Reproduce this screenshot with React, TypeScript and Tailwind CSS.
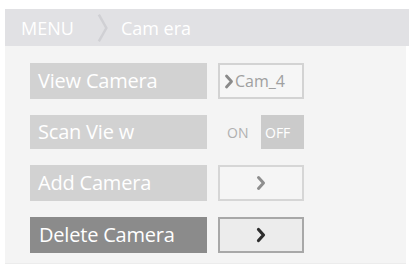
import React from "react";

const Chevron = ({ className, w = 2.6 }: { className?: string; w?: number }) => (
  <svg viewBox="0 0 10 16" className={className} fill="none" stroke="currentColor" strokeWidth={w} strokeLinecap="round" strokeLinejoin="round">
    <path d="M2.5 2.5 L7.5 8 L2.5 13.5" />
  </svg>
);

export default function App() {
  const font = { fontFamily: '"Open Sans", "Liberation Sans", sans-serif' };
  return (
    <div className="w-[414px] h-[267px] bg-white pt-[9px] pl-[5px]" style={font}>
      <div className="w-[404px] h-[37px] bg-[#e1e1e4] flex items-center pl-[16px] text-white">
        <span className="text-[18px] leading-none">MENU</span>
        <svg viewBox="0 0 14 36" className="w-[14px] h-[30px] ml-[22px] text-[#d0d0d4]" fill="none" stroke="currentColor" strokeWidth="3">
          <path d="M2 2 L11 18 L2 34" />
        </svg>
        <span className="text-[18px] leading-none ml-[11px]">Cam era</span>
      </div>
      <div className="w-[401px] h-[218px] bg-[#f4f4f4] border-b border-[#ececec] pl-[25px] pt-[17px] flex flex-col gap-[16px]">
        <div className="flex h-[36px] gap-[11px]">
          <div className="w-[177px] bg-[#d2d2d2] text-white text-[20px] tracking-[-0.2px] flex items-center pl-[8px]">View Camera</div>
          <div className="w-[86px] border-2 border-[#d3d3d3] bg-[#f6f6f6] flex items-center pl-[4px] text-[#a0a0a0] text-[16px]">
            <Chevron className="w-[10px] h-[17px] text-[#8a8a8a] mr-[1px]" w={2.8} />
            <span>Cam_4</span>
          </div>
        </div>
        <div className="flex h-[34px] gap-[11px]">
          <div className="w-[177px] bg-[#d2d2d2] text-white text-[20px] tracking-[-0.2px] flex items-center pl-[8px]">Scan Vie w</div>
          <div className="w-[86px] flex items-center">
            <span className="text-[#b0b0b0] text-[14px] ml-[9px] w-[34px]">ON</span>
            <div className="w-[43px] h-full bg-[#cbcbcb] text-white text-[14px] flex items-center pl-[4px]">OFF</div>
          </div>
        </div>
        <div className="flex h-[36px] gap-[11px]">
          <div className="w-[177px] bg-[#d2d2d2] text-white text-[20px] tracking-[-0.2px] flex items-center pl-[8px]">Add Camera</div>
          <div className="w-[86px] border-2 border-[#d6d6d6] bg-[#f5f5f5] flex items-center justify-center">
            <Chevron className="w-[10px] h-[16px] text-[#8e8e8e]" w={3} />
          </div>
        </div>
        <div className="flex h-[36px] gap-[11px]">
          <div className="w-[177px] bg-[#8b8b8b] text-white text-[20px] tracking-[-0.2px] flex items-center pl-[9px]">Delete Camera</div>
          <div className="w-[86px] border-2 border-[#a8a8a8] bg-[#ececec] flex items-center justify-center">
            <Chevron className="w-[10px] h-[16px] text-[#2e2e2e]" w={3.2} />
          </div>
        </div>
      </div>
    </div>
  );
}
